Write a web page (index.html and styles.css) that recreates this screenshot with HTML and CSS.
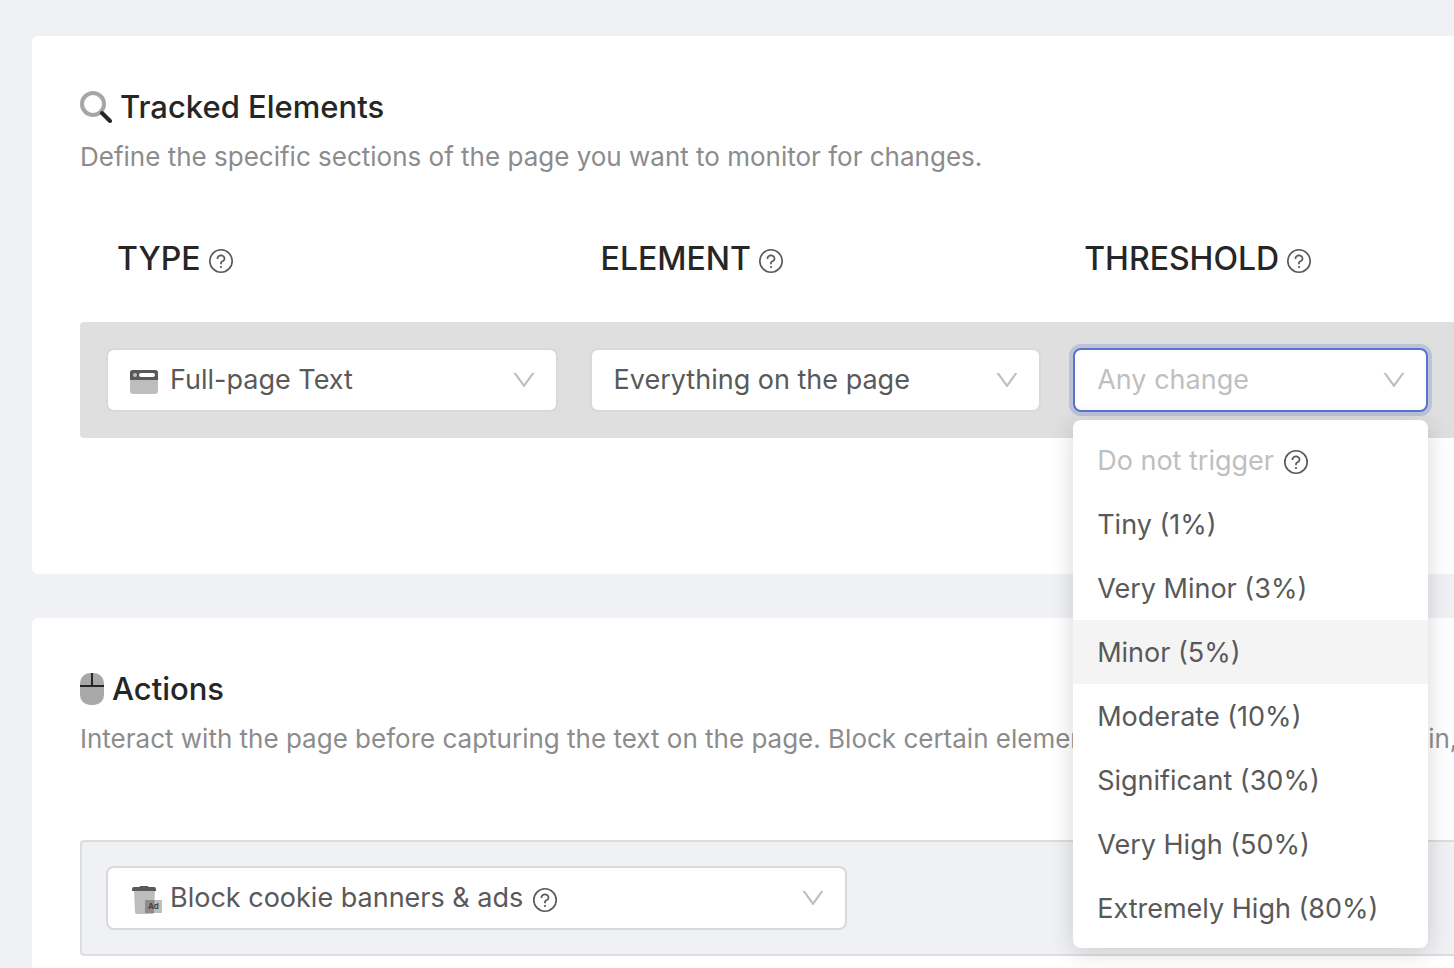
FILE: index.html
```html
<!DOCTYPE html>
<html lang="en">
<head>
  <meta charset="UTF-8" />
  <meta name="viewport" content="width=device-width, initial-scale=1.0"/>
  <title>Tracked Elements</title>
  <link rel="stylesheet" href="styles.css">
</head>
<body>
  <!-- shared icons -->
  <svg class="sprite" aria-hidden="true">
    <symbol id="help" viewBox="0 0 1024 1024">
      <circle cx="512" cy="512" r="410" fill="none" stroke="currentColor" stroke-width="60"/>
      <path fill="currentColor" d="M623.6 316.7C593.6 290.4 554 276 512 276s-81.6 14.5-111.6 40.7C369.2 344 352 380.7 352 420v7.6c0 4.4 3.6 8 8 8h48c4.4 0 8-3.6 8-8V420c0-44.1 43.1-80 96-80s96 35.9 96 80c0 31.1-22 59.6-56.1 72.7-21.2 8.1-39.2 22.3-52.1 40.9-13.1 19-19.9 41.8-19.9 64.9V620c0 4.4 3.6 8 8 8h48c4.4 0 8-3.6 8-8v-22.7a48.3 48.3 0 0130.9-44.8c59-22.7 97.1-74.7 97.1-132.5.1-39.3-17.1-76-48.3-103.3zM472 732a40 40 0 1080 0 40 40 0 10-80 0z"/>
    </symbol>
    <symbol id="down" viewBox="0 0 1024 1024">
      <path fill="currentColor" d="M884 256h-75c-5.1 0-9.9 2.5-12.9 6.6L512 654.2 227.9 262.6c-3-4.1-7.8-6.6-12.9-6.6h-75c-6.5 0-10.3 7.4-6.5 12.7l352.6 486.1c12.8 17.6 39 17.6 51.7 0l352.6-486.1c3.9-5.3.1-12.7-6.4-12.7z"/>
    </symbol>
  </svg>

  <section class="card">
    <h2>
      <svg width="32" height="32" viewBox="0 0 32 32">
        <circle cx="13" cy="13" r="11" fill="none" stroke="#a6a6a6" stroke-width="4"/>
        <path d="M22 22L30 30" stroke="#262626" stroke-width="4" stroke-linecap="round"/>
      </svg>
      Tracked Elements
    </h2>
    <p class="desc">Define the specific sections of the page you want to monitor for changes.</p>

    <div class="columns head">
      <label for="type">TYPE <svg class="help"><use href="#help"/></svg></label>
      <label for="element">ELEMENT <svg class="help"><use href="#help"/></svg></label>
      <label for="threshold">THRESHOLD <svg class="help"><use href="#help"/></svg></label>
    </div>
    <div class="columns row">
      <div class="select">
        <svg class="icon" viewBox="0 0 32 32">
          <rect x="0" y="6" width="28" height="24" rx="3" fill="#bdbdbd"/>
          <path d="M0 16V9a3 3 0 0 1 3-3h22a3 3 0 0 1 3 3v7z" fill="#595959"/>
          <circle cx="5" cy="11" r="2" fill="#bdbdbd"/>
          <rect x="9" y="9" width="16" height="4" rx="2" fill="#fff"/>
        </svg>
        <select id="type"><option>Full-page Text</option></select>
        <svg class="down"><use href="#down"/></svg>
      </div>
      <div class="select">
        <select id="element"><option>Everything on the page</option></select>
        <svg class="down"><use href="#down"/></svg>
      </div>
      <div class="select open">
        <select id="threshold"><option>Any change</option></select>
        <svg class="down"><use href="#down"/></svg>
        <ul class="menu" role="listbox" aria-label="Threshold">
          <li class="disabled" role="option" aria-disabled="true">Do not trigger <svg class="help"><use href="#help"/></svg></li>
          <li role="option">Tiny (1%)</li>
          <li role="option">Very Minor (3%)</li>
          <li class="active" role="option">Minor (5%)</li>
          <li role="option">Moderate (10%)</li>
          <li role="option">Significant (30%)</li>
          <li role="option">Very High (50%)</li>
          <li role="option">Extremely High (80%)</li>
        </ul>
      </div>
    </div>
  </section>

  <section class="card">
    <h2>
      <svg width="24" height="32" viewBox="0 0 24 32">
        <rect width="24" height="32" rx="10" fill="#a8a8a8"/>
        <path d="M0 13h24M12 0v13" stroke="#262626" stroke-width="2"/>
      </svg>
      Actions
    </h2>
    <p class="desc">Interact with the page before capturing the text on the page. Block certain elements, click on any buttons, log in, and more.</p>

    <div class="row action">
      <div class="select">
        <svg class="icon" viewBox="0 0 32 32">
          <path d="M4 8h21l-1 22a2 2 0 0 1-2 2H7a2 2 0 0 1-2-2z" fill="#bdbdbd"/>
          <path d="M9 5q1-1 2-1h6q1 0 2 1h5a2 2 0 0 1 2 2v2H2V7a2 2 0 0 1 2-2z" fill="#595959"/>
          <rect x="15" y="18" width="17" height="13" rx="1" fill="#bdbdbd"/>
          <path d="M15 18h9.500l-.6 13H15z" fill="#8c8c8c"/>
          <text x="18" y="27" class="ad">Ad</text>
        </svg>
        <select id="action" aria-label="Action"><option>Block cookie banners &amp; ads</option></select>
        <svg class="help"><use href="#help"/></svg>
        <svg class="down"><use href="#down"/></svg>
      </div>
    </div>
  </section>
</body>
</html>
```
FILE: styles.css
```css
* {
  box-sizing: border-box;
}
body {
  margin: 0;
  padding: 36px 0 0 32px;
  background: #f0f1f5;
  color: #595959;
  font-family: Inter, "Liberation Sans", sans-serif;
  font-size: 27px;
  overflow-x: hidden;
}
.sprite {
  display: none;
}
.card {
  margin-bottom: 44px;
  background: white;
  border-radius: 6px 0 0 6px;
  padding: 47px 0 136px 48px;
}
h2 {
  display: flex;
  align-items: center;
  gap: 8px;
  margin: 0;
  color: #262626;
  font-size: 31px;
  font-weight: 500;
  line-height: 48px;
}
.desc {
  margin: 6px 0 0;
  color: #8c8c8c;
  font-size: 26px;
  line-height: 40px;
  white-space: nowrap;
  overflow: hidden;
}
.columns {
  display: grid;
  grid-template-columns: 14fr 14fr 11fr;
  gap: 32px;
  padding: 26px;
}
.head {
  margin-top: 36px;
  padding-bottom: 43px;
}
.head label {
  display: flex;
  align-items: center;
  gap: 6px;
  padding-left: 11px;
  color: #262626;
  font-size: 32px;
  font-weight: 500;
  line-height: 40px;
}
.help {
  flex: none;
  width: 28px;
  height: 28px;
  color: #595959;
  position: relative;
  top: 2px;
}
.row {
  background: #dfdfdf;
  border-radius: 4px 0 0 4px;
}
.select {
  position: relative;
  display: flex;
  align-items: center;
  height: 64px;
  padding: 0 18px 0 22px;
  background: white;
  border: 2px solid #d9d9d9;
  border-radius: 8px;
}
.select select {
  appearance: none;
  field-sizing: content;
  padding: 0;
  background: none;
  border: 0;
  outline: 0;
  color: inherit;
  font: inherit;
  line-height: 40px;
}
.icon {
  width: 32px;
  height: 32px;
  margin-right: 8px;
}
.select > .help {
  margin-left: 8px;
}
.down {
  width: 28px;
  height: 28px;
  margin-left: auto;
  color: #bfbfbf;
}
.open {
  border-color: #5676cc;
  box-shadow: 0 0 0 4px #bcc3d9;
}
.open select {
  color: #bfbfbf;
}
.menu {
  position: absolute;
  top: 100%;
  left: -2px;
  right: -2px;
  z-index: 1;
  margin: 10px 0 0;
  padding: 8px 0;
  background: white;
  border-radius: 8px;
  box-shadow: 0 4px 24px rgba(0,0,0,0.16);
  list-style: none;
}
.menu li {
  display: flex;
  align-items: center;
  gap: 8px;
  height: 64px;
  padding: 0 24px;
}
.menu .disabled {
  color: #bfbfbf;
}
.menu .active {
  background: #f4f4f4;
}
.action {
  margin-top: 81px;
  padding: 24px;
  background: #f0f1f5;
  border: 2px solid #dcdddd;
  border-right: 0;
}
.action .select {
  width: 56%;
}
.ad {
  fill: #444;
  font-size: 8px;
  font-weight: 700;
}
```
